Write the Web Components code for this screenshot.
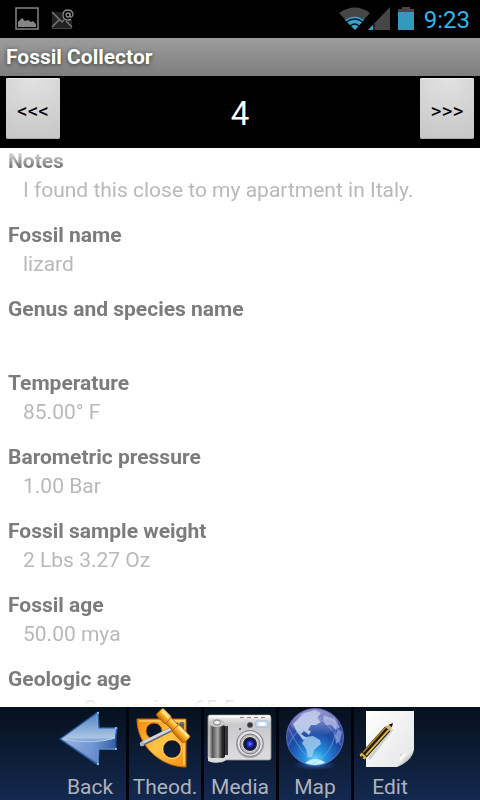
<!DOCTYPE html>
<html lang="en">
<head>
<meta charset="utf-8">
<meta name="viewport" content="width=device-width, initial-scale=1">
<title>Fossil Collector</title>
<style>
  body {
    margin: 0;
    background: #000;
    font-family: Roboto, "Noto Sans", sans-serif;
    font-size: 21px;
  }
</style>
</head>
<body>
<fossil-app>
  <status-bar slot="top" time="9:23"></status-bar>
  <title-bar slot="top">Fossil Collector</title-bar>
  <record-pager slot="top" record="4"></record-pager>
  <record-details></record-details>
  <tool-bar slot="bottom">
    <tool-button icon="back">Back</tool-button>
    <tool-button icon="theodolite">Theod.</tool-button>
    <tool-button icon="camera">Media</tool-button>
    <tool-button icon="globe">Map</tool-button>
    <tool-button icon="edit">Edit</tool-button>
  </tool-bar>
</fossil-app>

<script>
const FIELDS = [
  ["Notes", "I found this close to my apartment in Italy."],
  ["Fossil name", "lizard"],
  ["Genus and species name", ""],
  ["Temperature", "85.00° F"],
  ["Barometric pressure", "1.00 Bar"],
  ["Fossil sample weight", "2 Lbs 3.27 Oz"],
  ["Fossil age", "50.00 mya"],
  ["Geologic age", "Cenozoic – 65.5 mya", "nested"]
];

const ICONS = {
  back: `
    <defs>
      <linearGradient id="a" x1="0" y1="0" x2="0" y2="1">
        <stop offset="0" stop-color="#4f80bb"/><stop offset=".48" stop-color="#a9c4e4"/>
        <stop offset=".54" stop-color="#7d9fd4"/><stop offset="1" stop-color="#456fb2"/>
      </linearGradient>
      <linearGradient id="b"><stop offset="0" stop-color="#a3bae8"/><stop offset=".6" stop-color="#6c93d2"/><stop offset="1" stop-color="#1f509c"/></linearGradient>
    </defs>
    <path d="M6 32 44 5 45 21 63 21 Q61 31 62 42L45 42 44 58Z" fill="url(#a)" stroke="#2559a0" stroke-width="1.4" stroke-linejoin="round"/>
    <path d="M8 32Q40 38 62 31V41H44V56Z" fill="url(#b)" opacity=".8"/>
    <path d="M43 7 44 22H62" fill="none" stroke="#86aedb" stroke-width=".8"/>
    <path d="M9 32Q40 38 61 31" fill="none" stroke="#c3d8f2" stroke-width=".8"/>
    <path d="M44 57V42H62" fill="none" stroke="#86a9dc" stroke-width=".8"/>
    <g fill="#b8cdee"><circle cx="44" cy="6" r="1"/><circle cx="62" cy="21" r="1"/><circle cx="62" cy="42" r="1"/><circle cx="44" cy="57" r="1"/></g>`,
  theodolite: `
    <defs>
      <linearGradient id="a" x1="0" y1="0" x2="1" y2="1"><stop offset="0" stop-color="#f08a10"/><stop offset=".5" stop-color="#ffc545"/><stop offset="1" stop-color="#f58e12"/></linearGradient>
      <linearGradient id="b" x1="0" y1="0" x2="0" y2="1"><stop offset="0" stop-color="#ffe08a"/><stop offset=".45" stop-color="#ffb52c"/><stop offset="1" stop-color="#c46804"/></linearGradient>
    </defs>
    <path fill-rule="evenodd" d="M8 12H57V60C31 60 8 38 8 12ZM33 24a8 8 0 1 0-16 0a8 8 0 1 0 16 0ZM52 42a9 9 0 1 0-18 0a9 9 0 1 0 18 0Z" fill="url(#a)" stroke="#c76306" stroke-width="1"/>
    <path d="M10 14H55V58" fill="none" stroke="#ffdf80" stroke-width="1.2"/>
    <circle cx="43" cy="42" r="9.6" fill="none" stroke="#ffd978" stroke-width=".9"/>
    <path d="M47 17h7v6" fill="none" stroke="#8a5a0c" stroke-width="2.5"/>
    <path d="M13 37 53 17" stroke="#646878" stroke-width="4.5" stroke-linecap="round"/>
    <path d="M13 36 52 17" stroke="#d3d6e0" stroke-width="2.6" stroke-linecap="round"/>
    <circle cx="13" cy="37" r="2.2" fill="#aeb2bc"/><circle cx="52" cy="18" r="2" fill="#56585c"/>
    <g transform="translate(31 5) rotate(46)">
      <rect x="9" y="-4" width="27" height="8" rx="1" fill="url(#b)" stroke="#b15b05" stroke-width=".8"/>
      <rect x="-1" y="-5" width="13" height="10" rx="2" fill="url(#b)" stroke="#b15b05" stroke-width=".8"/>
      <rect x="22" y="-5" width="17" height="10" rx="2" fill="url(#b)" stroke="#b15b05" stroke-width=".8"/>
      <path d="M1-2H10M24-3H37" stroke="#fff0ad" stroke-width="1.6"/>
    </g>`,
  camera: `
    <defs>
      <linearGradient id="a" x1="0" y1="0" x2="0" y2="1"><stop offset="0" stop-color="#f4f4f4"/><stop offset=".2" stop-color="#c9c8ca"/><stop offset="1" stop-color="#dedee0"/></linearGradient>
      <linearGradient id="b"><stop offset="0" stop-color="#c5c5c5"/><stop offset=".22" stop-color="#555"/><stop offset=".55" stop-color="#aaa"/><stop offset=".8" stop-color="#333"/><stop offset="1" stop-color="#111"/></linearGradient>
      <radialGradient id="c"><stop offset="0" stop-color="#7d8cff"/><stop offset=".4" stop-color="#2330d8"/><stop offset="1" stop-color="#05072c"/></radialGradient>
    </defs>
    <path d="M6 8H65Q67 8 67 11V51Q67 53 65 53H22L18 55H8Q4 54 4 51V10Q4 8 6 8Z" fill="url(#a)" stroke="#8e9095" stroke-width=".8"/>
    <path d="M5 9.500H66" stroke="#fff" stroke-width="2"/>
    <path d="M36 10.500h4M43 10.500h4M50 10.500h4M57 10.500h4" stroke="#a67b7b" stroke-width="1"/>
    <path d="M21 19H24V48H21Z" fill="#38383a"/>
    <rect x="5" y="18" width="16" height="33" rx="2" fill="url(#b)"/>
    <path d="M4 50Q13 56 22 50V53Q13 58 4 54Z" fill="#dadada"/>
    <ellipse cx="13" cy="16" rx="8" ry="4" fill="#c8c8ca"/><ellipse cx="13" cy="15.500" rx="3.5" ry="2.5" fill="#eee" stroke="#666" stroke-width=".8"/>
    <rect x="52" y="14" width="12" height="6" rx="1" fill="#cfe5fb" stroke="#8eabc6" stroke-width=".7"/><path d="M55 17h6" stroke="#fff" stroke-width="3"/>
    <circle cx="46" cy="18" r="2.8" fill="#38393d"/><circle cx="36" cy="22" r="1" fill="#444"/>
    <circle cx="46" cy="37" r="14" fill="#a9a9ab"/><circle cx="46" cy="36.500" r="13" fill="#e2e2e2" stroke="#747477" stroke-width=".8"/>
    <circle cx="46" cy="37" r="10" fill="#b8b9bd" stroke="#77777a" stroke-width="1"/>
    <circle cx="46" cy="37" r="7.500" fill="#25262c" stroke="#e8e8e8" stroke-width="1"/>
    <circle cx="46" cy="37" r="5.500" fill="url(#c)"/>`,
  globe: `
    <defs>
      <radialGradient id="a" cx=".5" cy=".9" r=".95"><stop offset="0" stop-color="#6fd6fb"/><stop offset=".2" stop-color="#2590e0"/><stop offset=".5" stop-color="#1c4ba6"/><stop offset="1" stop-color="#5d55ab"/></radialGradient>
      <radialGradient id="g"><stop offset="0" stop-color="#2b75d0" stop-opacity=".7"/><stop offset="1" stop-color="#2b75d0" stop-opacity="0"/></radialGradient>
      <linearGradient id="b" x1="0" y1="0" x2="0" y2="1"><stop offset="0" stop-color="#b9b6e6" stop-opacity=".6"/><stop offset="1" stop-color="#fff" stop-opacity="0"/></linearGradient>
      <clipPath id="c"><circle cx="36" cy="30" r="28"/></clipPath>
    </defs>
    <ellipse cx="36" cy="58" rx="22" ry="5" fill="url(#g)"/>
    <circle cx="36" cy="30" r="28.500" fill="url(#a)" stroke="#6f70c2" stroke-width=".8"/>
    <g clip-path="url(#c)">
      <path d="M18 13 25 6 36 3 42 6 38 11 42 15 37 18 32 18 29 23 32 24 30 28 25 24 22 27 28 31 24 33 18 25 14 17Z" fill="#c6d6ee" opacity=".85"/>
      <path d="M27 30 34 29 41 33 42 37 35 43 33 50 29 50 27 42 23 36Z" fill="#a9d0ee" opacity=".8"/>
      <path d="M45 8 55 12 61 20 57 23 52 18 47 18 44 13Z" fill="#a9b8e4" opacity=".7"/>
      <path d="M59 22 63 25 61 34 57 37 56 29Z" fill="#a9c5ea" opacity=".55"/>
      <path d="M25 57Q36 47 48 57L36 60Z" fill="#bdf4ff"/>
      <path d="M8 18Q22 49 39 58M8 40Q29 1 57 14M55 8Q62 43 32 58M19 7Q47 6 62 38" fill="none" stroke="#a5c8f5" stroke-width=".7" opacity=".6"/>
      <ellipse cx="35" cy="15" rx="24" ry="14" fill="url(#b)"/>
    </g>`,
  edit: `
    <defs>
      <linearGradient id="a" x1="0" y1="0" x2="1" y2="1"><stop offset="0" stop-color="#fff"/><stop offset="1" stop-color="#e3e4e5"/></linearGradient>
      <linearGradient id="b" x1="0" y1="0" x2="1" y2="1"><stop offset=".1" stop-color="#8b8b8b"/><stop offset=".35" stop-color="#fff"/><stop offset=".6" stop-color="#c4c4c4"/></linearGradient>
    </defs>
    <path d="M12 4H60V43L43 60H12Z" fill="url(#a)"/>
    <path d="M43 60Q47 54 46 47Q53 48 60 43Q58 54 43 60Z" fill="url(#b)"/>
    <path d="M38 22 15 52" stroke="#b9b9b9" stroke-width="3" opacity=".6"/>
    <g transform="translate(39 16) rotate(132)">
      <path d="M0 0 8-3.500V3.500Z" fill="#d9b47b"/><path d="M0 0 4-2V2Z" fill="#16130e"/>
      <path d="M8-3.500H46V3.500H8Z" fill="#231b08"/>
      <path d="M8-1.500H42" stroke="#dcbc4c" stroke-width="1.8"/><path d="M8 2.500H42" stroke="#b18a1c" stroke-width="1.400"/>
      <path d="M43-3.500H46Q48 0 46 3.500H43Z" fill="#d5b94a"/><circle cx="46" cy="0" r="1.300" fill="#3a2c10"/>
    </g>`
};

class FossilApp extends HTMLElement {
  constructor() {
    super();
    this.attachShadow({ mode: "open" }).innerHTML = `
      <style>
        :host { display: flex; flex-direction: column; height: 100vh; }
        main { flex: 1; min-height: 0; display: grid; background: #fff; }
      </style>
      <header><slot name="top"></slot></header>
      <main><slot></slot></main>
      <slot name="bottom"></slot>
    `;
  }
}

class StatusBar extends HTMLElement {
  connectedCallback() {
    this.attachShadow({ mode: "open" }).innerHTML = `
      <style>
        :host {
          display: flex;
          align-items: center;
          justify-content: space-between;
          height: 38px;
          padding: 0 10px 0 15px;
          background: #000;
          color: #33b5e5;
        }
        div { display: flex; align-items: center; }
        .notices { gap: 12px; }
        svg { display: block; }
        .battery { margin: 0 10px 0 8px; }
        time { font-size: 24px; line-height: 38px; margin-top: 2px; }
      </style>
      <div class="notices">
        <svg width="24" height="24" viewBox="0 0 24 24" aria-hidden="true">
          <rect x="1" y="1" width="22" height="21" fill="none" stroke="#858585" stroke-width="1.500"/>
          <path d="M3 20V15L7 11 10 14 13 13 16 15 18 14 21 17V20Z" fill="#858585"/>
        </svg>
        <svg width="24" height="24" viewBox="0 0 24 24" aria-hidden="true">
          <rect x="1" y="5" width="20" height="16" fill="#222"/>
          <path d="M1 5 11 15 13 13M1 20 8 13M15 14 21 20" fill="none" stroke="#777" stroke-width="1.500"/>
          <path d="M1 21.500H21" stroke="#444"/>
          <circle cx="17" cy="8" r="5.500" fill="#000"/>
          <circle cx="17" cy="8" r="2" fill="none" stroke="#888" stroke-width="1.300"/>
          <path d="M19 6V9Q19 10.500 20.500 10Q22 9 22 7Q21 3 17 3Q12 3 12 8Q12 13 17 13L20 12.500" fill="none" stroke="#888" stroke-width="1.300"/>
        </svg>
      </div>
      <div>
        <svg width="51" height="24" viewBox="0 0 51 24" aria-hidden="true">
          <path d="M0 6Q16-5 31 6L16 23Z" fill="#464646"/>
          <path d="M6 13Q16 6 25 13L16 23Z" fill="#35a5cf"/>
          <path d="M7 15Q16 9 24 15M11 19Q16 15 20 19" fill="none" stroke="#061319" stroke-width="1.300"/>
          <path d="M29 23 51 0V23Z" fill="#464646"/><path d="M29 23 34 18V23Z" fill="#35a5cf"/>
          <path d="M35 17V23" stroke="#000"/>
        </svg>
        <svg class="battery" width="16" height="24" viewBox="0 0 16 24" aria-hidden="true">
          <path d="M4 0H12V2H16V5H0V2H4Z" fill="#4b4547"/><path d="M0 5H16V23H0Z" fill="#3598bf"/>
        </svg>
        <time>${this.getAttribute("time")}</time>
      </div>
    `;
  }
}

class TitleBar extends HTMLElement {
  constructor() {
    super();
    this.attachShadow({ mode: "open" }).innerHTML = `
      <style>
        :host { display: block; padding: 0 6px; background: linear-gradient(#9c9c9c, #7e7e7e); }
        h1 {
          margin: 0;
          font-size: 21px;
          line-height: 38px;
          font-weight: 700;
          color: #fff;
          text-shadow: 0 1px 4px #333;
        }
      </style>
      <h1><slot></slot></h1>
    `;
  }
}

class RecordPager extends HTMLElement {
  connectedCallback() {
    this.attachShadow({ mode: "open" }).innerHTML = `
      <style>
        :host { display: block; background: #000; }
        nav {
          display: flex;
          justify-content: space-between;
          align-items: flex-start;
          padding: 2px 6px 9px;
        }
        button {
          width: 54px;
          height: 61px;
          padding: 5px 0 0;
          border: 0;
          border-radius: 2px;
          background: radial-gradient(circle at 50% 0, #e2e2e2, #c6c6c6);
          box-shadow: inset 0 1px #eee, inset 0 -1px #aaa;
          font: 21px Roboto, sans-serif;
          color: #000;
        }
        output { font-size: 33px; line-height: 72px; height: 61px; color: #fff; }
      </style>
      <nav aria-label="Records">
        <button type="button" aria-label="Previous record">&lt;&lt;&lt;</button>
        <output>${this.getAttribute("record")}</output>
        <button type="button" aria-label="Next record">&gt;&gt;&gt;</button>
      </nav>
    `;
  }
}

class RecordDetails extends HTMLElement {
  connectedCallback() {
    const rows = FIELDS.map(([label, value, kind = ""]) => `
      <div><dt>${label}</dt><dd class="${kind}">${value}</dd></div>`).join("");

    this.attachShadow({ mode: "open" }).innerHTML = `
      <style>
        :host {
          display: block;
          overflow-y: auto;
          scrollbar-width: none;
          mask-image: linear-gradient(transparent, #000 18px, #000 calc(100% - 18px), transparent);
        }
        dl { display: grid; gap: 16px; margin: 0; padding: 0 8px 16px; }
        dt { font-weight: 700; line-height: 26px; color: #7c7c7c; }
        dd { margin: 0 0 0 15px; line-height: 32px; min-height: 32px; color: #b9b9b9; }
        .nested { margin-left: 75px; }
      </style>
      <dl>${rows}</dl>
    `;
  }
}

class ToolBar extends HTMLElement {
  constructor() {
    super();
    this.attachShadow({ mode: "open" }).innerHTML = `
      <style>
        :host {
          --tool-fill: linear-gradient(#06111e, #0c1b33 45%, #142950);
          display: flex;
          justify-content: center;
          background: var(--tool-fill);
        }
        div { display: grid; grid-template-columns: repeat(5, 72px); gap: 3px; background: #01040a; }
      </style>
      <div role="toolbar" aria-label="Record tools"><slot></slot></div>
    `;
  }
}

class ToolButton extends HTMLElement {
  connectedCallback() {
    this.attachShadow({ mode: "open" }).innerHTML = `
      <style>
        :host { display: block; }
        button {
          display: flex;
          flex-direction: column;
          align-items: center;
          gap: 4px;
          width: 100%;
          padding: 0 0 1px;
          border: 0;
          background: var(--tool-fill);
          font: inherit;
          line-height: 24px;
          color: #adb3bd;
        }
        svg { display: block; }
      </style>
      <button type="button">
        <svg width="72" height="64" viewBox="0 0 72 64" aria-hidden="true">${ICONS[this.getAttribute("icon")]}</svg>
        <span><slot></slot></span>
      </button>
    `;
  }
}

customElements.define("fossil-app", FossilApp);
customElements.define("status-bar", StatusBar);
customElements.define("title-bar", TitleBar);
customElements.define("record-pager", RecordPager);
customElements.define("record-details", RecordDetails);
customElements.define("tool-bar", ToolBar);
customElements.define("tool-button", ToolButton);
</script>
</body>
</html>
